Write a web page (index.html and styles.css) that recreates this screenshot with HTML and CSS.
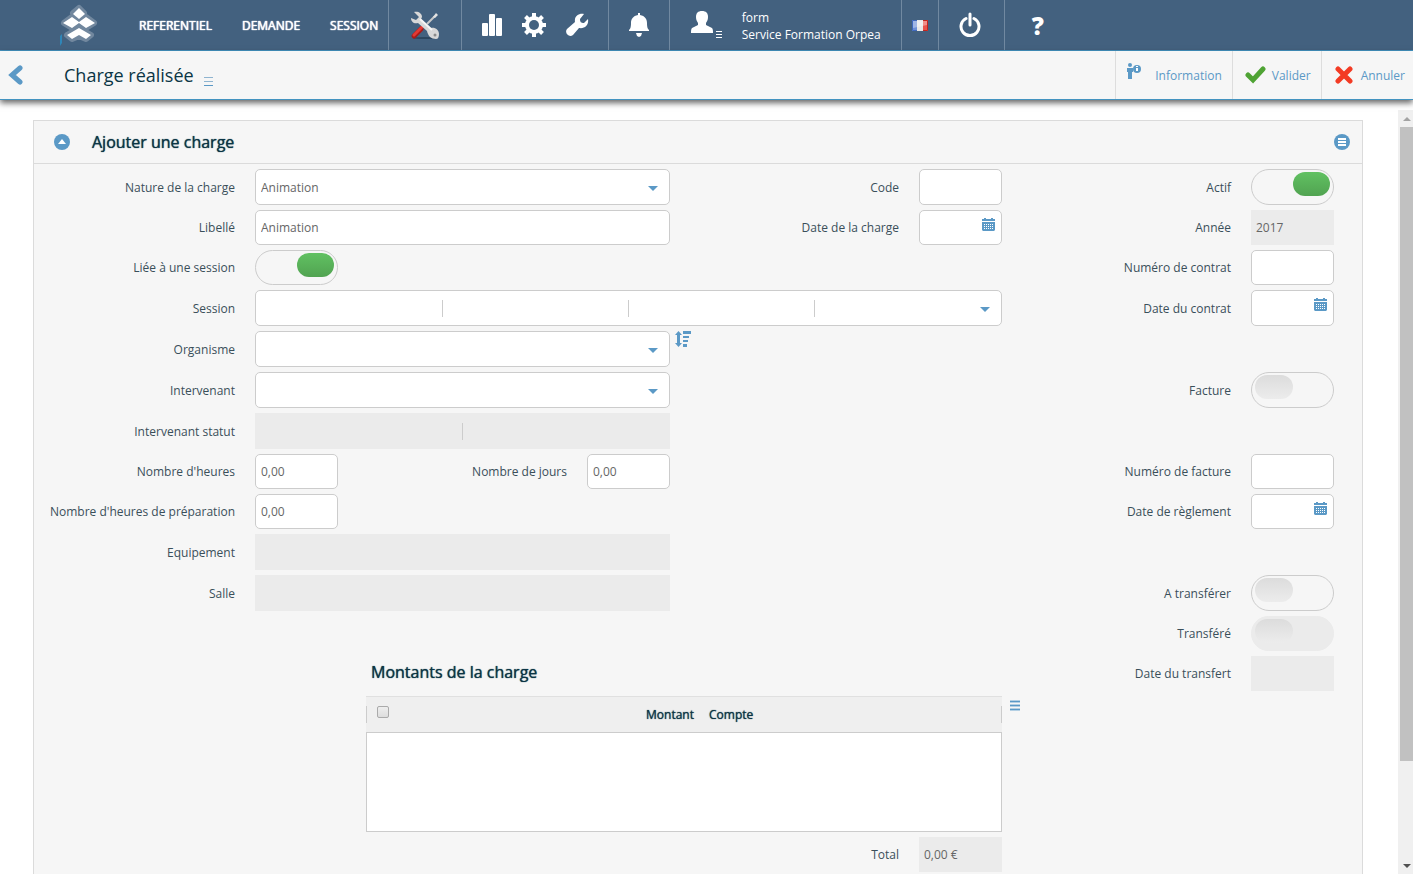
FILE: index.html
```html
<!DOCTYPE html>
<html lang="fr">
<head>
    <meta charset="UTF-8">
    <meta name="viewport" content="width=device-width, initial-scale=1.0">
    <title>Charge réalisée</title>
    <link rel="stylesheet" href="styles.css">
</head>
<body>
    <!-- Shared icons -->
    <svg class="sprite" aria-hidden="true">
        <symbol id="calendar" viewBox="0 0 13 13">
            <path fill="#5b99c6" d="M0 1h2V0h2v1h5V0h2v1h2v2H0zM0 4h13v8l-1 1H1l-1-1z"/>
            <path stroke="#fff" stroke-dasharray="1 1" d="M2 6.500h9M2 8.500h9M2 10.500h9"/>
        </symbol>
    </svg>

    <header class="topbar">
        <a href="#" class="logo" aria-label="Accueil">
            <svg width="38" height="46" viewBox="0 0 38 46">
                <path fill="#2f86b8" d="M0 36l2-2v9l-2 3z"/>
                <g stroke="#71879e" stroke-width="6" stroke-linejoin="round" fill="#71879e">
                    <path d="M19 8l5 5-5 6-6-6z"/>
                    <path d="M12 17l7 4 7-4 8 6-8 5-7-3-7 3-8-5z"/>
                    <path d="M19 28l12 7-5 4-7-3-7 3-5-4z"/>
                </g>
                <g fill="#fff">
                    <path d="M19 8l6 6-6 5-6-5z"/>
                    <path d="M12 17l7 5 7-5 9 6-9 5-7-5-7 5-9-5z"/>
                    <path d="M19 28l12 7-5 4-7-4-7 4-5-4z"/>
                </g>
            </svg>
        </a>
        <nav class="main-nav">
            <a href="#">REFERENTIEL</a>
            <a href="#">DEMANDE</a>
            <a href="#">SESSION</a>
        </nav>
        <div class="cell cell-tools">
            <button type="button" class="icon-btn" aria-label="Outils">
                <svg width="32" height="32" viewBox="0 0 32 32">
                    <ellipse cx="16" cy="29" rx="12" ry="1" fill="#2c465f"/>
                    <path fill="none" stroke="#c9c9c9" stroke-width="2" d="M26 7l-8 8"/>
                    <path fill="#e3e3e3" d="M27 4l2 2-3 3-2-1z"/>
                    <path fill="none" stroke="#a81a18" stroke-width="5" stroke-linecap="round" d="M5 27l7-7"/>
                    <path fill="none" stroke="#e23a35" stroke-width="3" stroke-linecap="round" d="M5 26l8-8"/>
                    <path fill="#d8d8d8" d="M5 3c4-1 8 1 8 5l-1 2 10 9c4-1 8 2 8 6 0 3-1 5-3 5-5 0-8-3-9-8l-9-8c-4 1-7-1-7-5l5 2 3-3z"/>
                    <path fill="none" stroke="#f5f5f5" stroke-width="2" d="M11 10l12 11"/>
                    <circle cx="26" cy="26" r="1.500" fill="#8b8b8b"/>
                </svg>
            </button>
        </div>
        <div class="cell cell-settings">
            <button type="button" class="icon-btn" aria-label="Statistiques">
                <svg width="20" height="24" viewBox="0 0 20 24" fill="#fff">
                    <rect x="0" y="10" width="6" height="13" rx="1"/>
                    <rect x="7" y="1" width="6" height="22" rx="1"/>
                    <rect x="14" y="5" width="6" height="18" rx="1"/>
                </svg>
            </button>
            <button type="button" class="icon-btn" aria-label="Paramètres">
                <svg width="24" height="24" viewBox="0 0 24 24">
                    <path stroke="#fff" stroke-width="4" d="M12 0v24M0 12h24M3.500 3.500l17 17M20.500 3.500l-17 17"/>
                    <circle cx="12" cy="12" r="9" fill="#fff"/>
                    <circle cx="12" cy="12" r="5" fill="#43617f"/>
                </svg>
            </button>
            <button type="button" class="icon-btn" aria-label="Maintenance">
                <svg width="23" height="24" viewBox="0 0 23 24" fill="#fff">
                    <path d="M18 1c-5-1-10 2-9 8l-8 7c-3 4 2 9 6 6l6-7c6 1 10-3 9-9l-4 4c-3 0-4-1-4-4z"/>
                </svg>
            </button>
        </div>
        <div class="cell cell-alert">
            <button type="button" class="icon-btn" aria-label="Notifications">
                <svg width="20" height="24" viewBox="0 0 20 24" fill="#fff">
                    <path d="M9 2V0h2v2c5 1 7 4 7 8 0 5 1 6 2 7v1H0v-1c1-1 2-2 2-7 0-4 2-7 7-8zM7 20h6l-1 3-2 1-2-1z"/>
                </svg>
            </button>
        </div>
        <div class="cell cell-user">
            <button type="button" class="icon-btn" aria-label="Menu utilisateur">
                <svg width="31" height="28" viewBox="0 0 31 28" fill="#fff">
                    <path d="M11 0c4 0 6 2 6 6 0 3-1 4-2 6v2l6 3c1 1 1 3 1 5H0c0-2 0-4 1-5l6-3v-2C6 10 5 9 5 6c0-4 2-6 6-6z"/>
                    <path d="M25 20h6v1h-6zM25 23h6v1h-6zM25 26h6v1h-6z"/>
                </svg>
            </button>
            <div class="user-name">
                <div>form</div>
                <div>Service Formation Orpea</div>
            </div>
        </div>
        <div class="cell cell-lang">
            <button type="button" class="icon-btn" aria-label="Français">
                <svg width="16" height="11" viewBox="0 0 16 11">
                    <path fill="#6d90d8" d="M0 0h5v11H0z"/>
                    <path fill="#e8e8e8" d="M5 0h6v11H5z"/>
                    <path fill="#e9534b" d="M11 0h5v11h-5z"/>
                    <path fill="#fff" opacity=".35" d="M1 1h14v4L1 8z"/>
                    <path fill="none" stroke="#c2261f" d="M11 .5h4.500v10H11"/>
                    <path fill="none" stroke="#4069bd" d="M5 .5H.5v10H5"/>
                </svg>
            </button>
        </div>
        <div class="cell cell-power">
            <button type="button" class="icon-btn" aria-label="Déconnexion">
                <svg width="22" height="26" viewBox="0 0 22 26" fill="none" stroke="#fff" stroke-width="3" stroke-linecap="round">
                    <path d="M7 6.500a9 9 0 1 0 8 0M11 2v11"/>
                </svg>
            </button>
        </div>
        <div class="cell cell-help">
            <button type="button" class="help-btn" aria-label="Aide">?</button>
        </div>
    </header>

    <div class="titlebar">
        <a href="#" class="back" aria-label="Retour">
            <svg width="15" height="20" viewBox="0 0 15 20" fill="none" stroke="#5b99c6" stroke-width="5" stroke-linecap="round">
                <path d="M12 3l-8 7 8 7"/>
            </svg>
        </a>
        <h1>Charge réalisée</h1>
        <button type="button" class="title-menu" aria-label="Menu">
            <svg width="9" height="9" viewBox="0 0 9 9">
                <path stroke="#8fb4d0" d="M0 .5h9M0 4.500h9"/>
                <path stroke="#5b99c6" d="M0 8.500h9"/>
            </svg>
        </button>
        <div class="actions">
            <button type="button" class="action action-info">
                <svg width="14" height="16" viewBox="0 0 14 16">
                    <g fill="#5b99c6">
                        <circle cx="3" cy="2" r="2"/>
                        <path d="M0 5h6v4H5v7H1V9H0z"/>
                        <circle cx="10" cy="6" r="4"/>
                    </g>
                    <path fill="#fff" d="M9 3h2v1H9zM9 5h2v3H9z"/>
                </svg>
                Information
            </button>
            <button type="button" class="action">
                <svg width="21" height="18" viewBox="0 0 21 18" fill="none" stroke="#4fa334" stroke-width="5" stroke-linecap="round">
                    <path d="M3 9l5 5L18 3"/>
                </svg>
                Valider
            </button>
            <button type="button" class="action action-cancel">
                <svg width="18" height="18" viewBox="0 0 18 18" fill="none" stroke="#f33b24" stroke-width="5" stroke-linecap="round">
                    <path d="M3 3l12 12M15 3L3 15"/>
                </svg>
                Annuler
            </button>
        </div>
    </div>

    <div class="page">
        <main class="content">
            <form class="panel">
                <div class="panel-header">
                    <button type="button" class="icon-btn" aria-label="Replier">
                        <svg width="16" height="16" viewBox="0 0 16 16">
                            <circle cx="8" cy="8" r="8" fill="#5b99c6"/>
                            <path fill="#fff" d="M8 5l4 5H4z"/>
                        </svg>
                    </button>
                    <h2>Ajouter une charge</h2>
                    <button type="button" class="icon-btn panel-menu" aria-label="Options">
                        <svg width="16" height="16" viewBox="0 0 16 16">
                            <circle cx="8" cy="8" r="8" fill="#5b99c6"/>
                            <path fill="#fff" d="M4 4h8v2H4zM4 7h8v2H4zM4 10h8v2H4z"/>
                        </svg>
                    </button>
                </div>

                <div class="fields">
                    <!-- Left column -->
                    <label class="l-left r1" for="nature">Nature de la charge</label>
                    <div class="picker f-wide r1">
                        <select id="nature"><option>Animation</option></select>
                    </div>
                    <label class="l-left r2" for="libelle">Libellé</label>
                    <input class="f-wide r2" type="text" id="libelle" value="Animation">
                    <label class="l-left r3" for="liee">Liée à une session</label>
                    <input class="toggle f-small r3" type="checkbox" id="liee" checked>
                    <label class="l-left r4" for="session">Session</label>
                    <div class="picker f-full r4">
                        <select id="session" class="split-4"><option></option></select>
                    </div>
                    <label class="l-left r5" for="organisme">Organisme</label>
                    <div class="picker f-wide r5">
                        <select id="organisme"><option></option></select>
                    </div>
                    <button type="button" class="sort-btn r5" aria-label="Trier">
                        <svg width="16" height="16" viewBox="0 0 16 16" fill="#5b99c6">
                            <path d="M3.500 0L7 4H5v8h2l-3.500 4L0 12h2V4H0zM8 0h8v3H8zM8 5h6v2H8zM8 9h5v2H8zM8 13h4v3H8z"/>
                        </svg>
                    </button>
                    <label class="l-left r6" for="intervenant">Intervenant</label>
                    <div class="picker f-wide r6">
                        <select id="intervenant"><option></option></select>
                    </div>
                    <label class="l-left r7" for="statut">Intervenant statut</label>
                    <input class="f-wide tall split-2 r7" type="text" id="statut" readonly>
                    <label class="l-left r8" for="heures">Nombre d'heures</label>
                    <input class="f-small r8" type="text" id="heures" value="0,00">
                    <label class="l-days r8" for="jours">Nombre de jours</label>
                    <input class="f-days r8" type="text" id="jours" value="0,00">
                    <label class="l-left r9" for="preparation">Nombre d'heures de préparation</label>
                    <input class="f-small r9" type="text" id="preparation" value="0,00">
                    <label class="l-left r10" for="equipement">Equipement</label>
                    <input class="f-wide tall r10" type="text" id="equipement" readonly>
                    <label class="l-left r11" for="salle">Salle</label>
                    <input class="f-wide tall r11" type="text" id="salle" readonly>

                    <!-- Middle column -->
                    <label class="l-mid r1" for="code">Code</label>
                    <input class="f-mid r1" type="text" id="code">
                    <label class="l-mid r2" for="date-charge">Date de la charge</label>
                    <div class="date f-mid r2">
                        <input type="text" id="date-charge">
                        <svg width="13" height="13"><use href="#calendar"/></svg>
                    </div>

                    <!-- Right column -->
                    <label class="l-right r1" for="actif">Actif</label>
                    <input class="toggle f-right r1" type="checkbox" id="actif" checked>
                    <label class="l-right r2" for="annee">Année</label>
                    <input class="f-right r2" type="text" id="annee" value="2017" readonly>
                    <label class="l-right r3" for="contrat">Numéro de contrat</label>
                    <input class="f-right r3" type="text" id="contrat">
                    <label class="l-right r4" for="date-contrat">Date du contrat</label>
                    <div class="date f-right r4">
                        <input type="text" id="date-contrat">
                        <svg width="13" height="13"><use href="#calendar"/></svg>
                    </div>
                    <label class="l-right r6" for="facture">Facture</label>
                    <input class="toggle f-right r6" type="checkbox" id="facture">
                    <label class="l-right r8" for="num-facture">Numéro de facture</label>
                    <input class="f-right r8" type="text" id="num-facture">
                    <label class="l-right r9" for="date-reglement">Date de règlement</label>
                    <div class="date f-right r9">
                        <input type="text" id="date-reglement">
                        <svg width="13" height="13"><use href="#calendar"/></svg>
                    </div>
                    <label class="l-right r11" for="a-transferer">A transférer</label>
                    <input class="toggle f-right r11" type="checkbox" id="a-transferer">
                    <label class="l-right r12" for="transfere">Transféré</label>
                    <input class="toggle f-right r12" type="checkbox" id="transfere" disabled>
                    <label class="l-right r13" for="date-transfert">Date du transfert</label>
                    <input class="f-right r13" type="text" id="date-transfert" readonly>

                    <!-- Amounts -->
                    <h3 class="amounts-title">Montants de la charge</h3>
                    <div class="amounts">
                        <table>
                            <thead>
                                <tr>
                                    <th class="col-check"><input type="checkbox" aria-label="Tout sélectionner"></th>
                                    <th class="col-amount">Montant</th>
                                    <th class="col-account">Compte</th>
                                </tr>
                            </thead>
                            <tbody>
                                <tr><td colspan="3"></td></tr>
                            </tbody>
                        </table>
                    </div>
                    <button type="button" class="grid-menu" aria-label="Options du tableau">
                        <svg width="10" height="12" viewBox="0 0 10 12">
                            <path fill="#b4d0e4" d="M0 0h10v3H0zM0 4h10v3H0zM0 8h10v3H0z"/>
                            <path fill="#5b99c6" d="M0 1h10v1H0zM0 5h10v1H0zM0 9h10v1H0z"/>
                        </svg>
                    </button>
                    <label class="l-mid r15" for="total">Total</label>
                    <input class="f-mid r15" type="text" id="total" value="0,00 €" readonly>
                </div>
            </form>
        </main>
        <div class="scrollbar" aria-hidden="true">
            <span class="arrow arrow-up"></span>
            <span class="thumb"></span>
            <span class="arrow arrow-down"></span>
        </div>
    </div>
</body>
</html>
```

FILE: styles.css
```css
* {
    box-sizing: border-box;
}

body {
    display: flex;
    flex-direction: column;
    height: 100vh;
    margin: 0;
    padding-bottom: 3px;
    font-family: 'Open Sans', sans-serif;
    font-size: 12px;
    color: #3a4f5a;
    background: #fff;
}

button, input, select {
    font: inherit;
    color: inherit;
}

button {
    display: flex;
    padding: 0;
    border: none;
    background: none;
    cursor: pointer;
}

svg {
    display: block;
    flex-shrink: 0;
}

.sprite {
    position: absolute;
    width: 0;
    height: 0;
}

/* Top bar */
.topbar {
    display: flex;
    flex-shrink: 0;
    height: 51px;
    background: #43617f;
    border-bottom: 1px solid #4393c0;
    color: #fff;
}

.logo {
    margin-left: 60px;
    width: 79px;
}

.main-nav {
    display: flex;
    align-items: center;
    gap: 30px;
    padding-right: 10px;
}

.main-nav a {
    color: #fff;
    text-decoration: none;
    text-shadow: 0 0 1px #fff, 0 0 1px #fff;
}

.cell {
    display: flex;
    align-items: center;
    justify-content: center;
    border-left: 1px solid #7189a1;
}

.cell-tools {
    width: 73px;
}

.cell-settings {
    width: 147px;
    gap: 20px;
}

.cell-alert {
    width: 61px;
}

.cell-user {
    width: 232px;
    gap: 20px;
}

.cell-lang {
    width: 37px;
}

.cell-power, .cell-help {
    width: 66px;
}

.cell-power {
    padding-right: 4px;
}

.user-name {
    padding-top: 2px;
    line-height: 17px;
}

.help-btn {
    font-size: 24px;
    font-weight: 800;
}

/* Title bar */
.titlebar {
    position: relative;
    z-index: 1;
    display: flex;
    flex-shrink: 0;
    align-items: center;
    height: 49px;
    background: #f6f6f6;
    border-bottom: 1px solid #4393c0;
    box-shadow: 0 3px 6px rgba(0, 0, 0, 0.6);
}

.back {
    width: 56px;
    margin-left: 8px;
}

h1, h2, h3 {
    margin: 0;
    font-weight: 400;
    color: #0b3545;
}

h1 {
    font-size: 18px;
}

.title-menu {
    margin: 12px 0 0 10px;
}

.actions {
    display: flex;
    align-self: stretch;
    margin-left: auto;
}

.action {
    display: flex;
    align-items: center;
    gap: 6px;
    padding: 0 10px 0 12px;
    border-left: 1px solid #ddd;
    color: #5b99c6;
}

.action-info {
    gap: 14px;
    padding-left: 11px;
}

.action-info svg {
    margin-bottom: 8px;
}

.action-cancel {
    gap: 8px;
    padding: 0 8px 0 13px;
}

/* Content */
.page {
    display: flex;
    flex: 1;
    min-height: 0;
    padding-top: 10px;
}

.content {
    flex: 1;
    padding: 10px 35px 0 33px;
    overflow-y: auto;
    scrollbar-width: none;
}

.panel {
    padding-bottom: 140px;
    border: 1px solid #dbdbdb;
    background: #f6f6f6;
}

.panel-header {
    display: flex;
    align-items: center;
    height: 43px;
    padding: 0 12px 0 20px;
    border-bottom: 1px solid #dbdbdb;
}

.panel-header h2 {
    margin-left: 22px;
}

.panel-menu {
    margin-left: auto;
}

h2, h3 {
    font-size: 16px;
    text-shadow: 0 0 1px #0b3545;
}

.fields {
    display: grid;
    grid-template-columns: 221px repeat(13, 1fr);
    row-gap: 5px;
    padding: 5px 28px 0 0;
}

.fields > label {
    align-self: center;
    justify-self: end;
    padding-right: 20px;
    white-space: nowrap;
}

.r1 { grid-row: 1; }
.r2 { grid-row: 2; }
.r3 { grid-row: 3; }
.r4 { grid-row: 4; }
.r5 { grid-row: 5; }
.r6 { grid-row: 6; }
.r7 { grid-row: 7; }
.r8 { grid-row: 8; }
.r9 { grid-row: 9; }
.r10 { grid-row: 10; }
.r11 { grid-row: 11; }
.r12 { grid-row: 12; }
.r13 { grid-row: 13; }
.r15 { grid-row: 15; }

.l-left { grid-column: 1; }
.f-small { grid-column: 2; }
.f-wide { grid-column: 2 / 7; }
.f-full { grid-column: 2 / 11; }
.l-days { grid-column: 3 / 6; }
.f-days { grid-column: 6; }
.l-mid { grid-column: 7 / 10; }
.f-mid { grid-column: 10; }
.l-right { grid-column: 11 / 14; }
.f-right { grid-column: 14; }

input[type="text"], select {
    width: 100%;
    min-width: 0;
    min-height: 35px;
    margin: 0;
    padding: 0 5px;
    border: 1px solid #ccc;
    border-radius: 5px;
    background-color: #fff;
    color: #666;
    outline: none;
}

input[type="text"]:read-only {
    border: none;
    border-radius: 0;
    background-color: #ebebeb;
}

input[type="text"].tall, select {
    min-height: 36px;
}

select {
    appearance: none;
}

.split-2, .split-4 {
    background-image: linear-gradient(#ccc, #ccc), linear-gradient(#ccc, #ccc), linear-gradient(#ccc, #ccc);
    background-repeat: no-repeat;
    background-size: 1px 17px;
    background-position: 25% center, 50% center, 75% center;
}

.split-2 {
    background-image: linear-gradient(#ccc, #ccc);
    background-position: 50% center;
}

.picker, .date {
    position: relative;
    display: flex;
}

.picker::after {
    content: "";
    position: absolute;
    top: 17px;
    right: 12px;
    border: 5px solid transparent;
    border-top-color: #5b99c6;
    border-bottom: none;
    pointer-events: none;
}

.date svg {
    position: absolute;
    top: 8px;
    right: 7px;
}

/* Switches */
.toggle {
    appearance: none;
    min-height: 35px;
    margin: 0;
    padding: 2px 3px;
    border: 1px solid #ccc;
    border-radius: 18px;
    cursor: pointer;
}

.toggle::before {
    content: "";
    display: block;
    width: 38px;
    height: 24px;
    border-radius: 12px;
    background: linear-gradient(#dcdcdc, #ececec);
}

.toggle:checked::before {
    width: 37px;
    margin-left: auto;
    background: linear-gradient(#61c162, #51a351);
}

.toggle:disabled {
    border-color: #ebebeb;
    background: #ebebeb;
}

.sort-btn {
    grid-column: 7;
    align-self: start;
    margin-left: 5px;
    width: 16px;
}

/* Amounts table */
.amounts-title {
    grid-area: 13 / 3 / 14 / 11;
    padding: 5px 0 0 33px;
}

.amounts {
    grid-area: 14 / 3 / 15 / 11;
    padding-left: 28px;
}

.amounts table {
    width: 100%;
    border-collapse: separate;
    border-spacing: 0;
    table-layout: fixed;
}

.amounts th {
    height: 36px;
    padding: 0 8px 0 7px;
    border-top: 1px solid #e0e0e0;
    background: #efefef no-repeat;
    background-size: 1px 17px;
    font-weight: 400;
    color: #0b3545;
    text-shadow: 0 0 1px #0b3545;
}

.amounts th.col-check {
    width: 50px;
    text-align: left;
    padding-left: 11px;
    background-image: linear-gradient(#ccc, #ccc);
    background-position: left center;
}

.amounts th.col-check input {
    appearance: none;
    display: block;
    width: 12px;
    height: 12px;
    margin: 0 0 5px;
    border: 1px solid #aaa;
    border-radius: 2px;
    background: linear-gradient(#eee, #ddd);
}

.amounts th.col-amount {
    text-align: right;
}

.amounts th.col-account {
    width: 300px;
    text-align: left;
    background-image: linear-gradient(#ccc, #ccc);
    background-position: right center;
}

.amounts td {
    height: 100px;
    border: 1px solid #ccc;
    background: #fff;
}

.grid-menu {
    grid-area: 14 / 11;
    align-self: start;
    width: 10px;
    margin: 4px 0 0 8px;
}

/* Scrollbar */
.scrollbar {
    display: flex;
    flex-direction: column;
    width: 15px;
    background: #f0f0f0;
}

.arrow {
    display: flex;
    align-items: center;
    justify-content: center;
    height: 17px;
    padding-left: 2px;
}

.arrow::before {
    content: "";
    border: 4px solid transparent;
}

.arrow-up::before {
    border-top: none;
    border-bottom-color: #a3a3a3;
}

.arrow-down {
    margin-top: auto;
}

.arrow-down::before {
    border-bottom: none;
    border-top-color: #505050;
}

.thumb {
    height: 83%;
    margin-left: 2px;
    background: #c1c1c1;
}
```
